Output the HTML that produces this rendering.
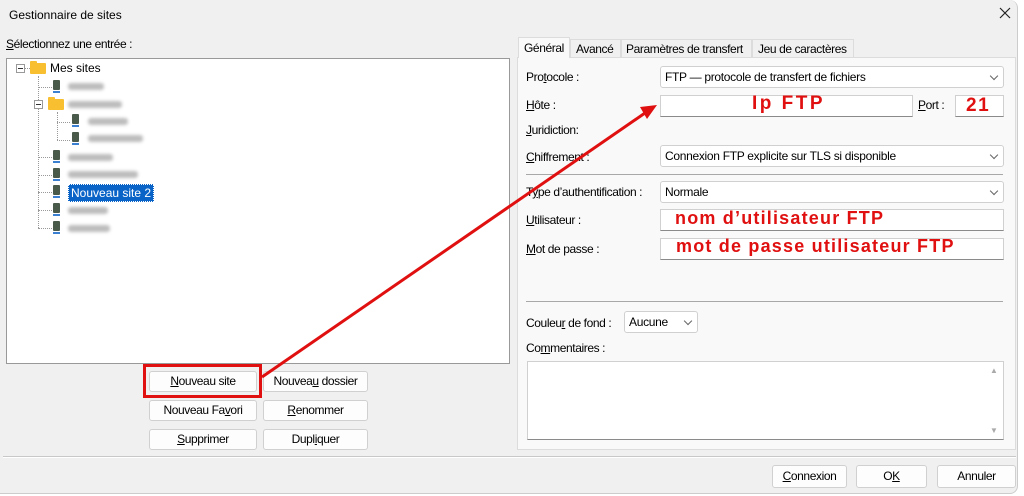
<!DOCTYPE html>
<html><head><meta charset="utf-8"><style>
*{box-sizing:border-box;margin:0;padding:0}
body{width:1024px;height:496px;background:#fff;font-family:"Liberation Sans",sans-serif;font-size:12px;color:#000;position:relative;overflow:hidden}
.win{position:absolute;left:0;top:0;width:1018px;height:494px;background:#f0f0f0;border-right:1px solid #ccc;border-bottom:1px solid #ccc;border-radius:0 8px 8px 0}
.a{position:absolute;white-space:nowrap}
.t{letter-spacing:-0.4px}
.box{position:absolute;background:#fff;border:1px solid #d0d0d0;border-bottom:1px solid #8a8a8a}
.btn{position:absolute;background:#fdfdfd;border:1px solid #d0d0d0;border-radius:3px;text-align:center;line-height:19px;letter-spacing:-0.4px}
.sel{position:absolute;background:#fff;border:1px solid #d0d0d0;border-radius:3px;padding-left:4px;line-height:20px;letter-spacing:-0.3px}
.sel:after{content:"";position:absolute;right:6px;top:6px;width:5px;height:5px;border-right:1px solid #666;border-bottom:1px solid #666;transform:rotate(45deg)}
.red{position:absolute;color:#e01010;font-weight:bold;font-size:18px;letter-spacing:1.2px;white-space:nowrap}
.blur{position:absolute;height:7px;background:#bdbdbd;border-radius:3px;filter:blur(1.5px)}
.srv{position:absolute;width:7px;height:14px}
.srv:before{content:"";position:absolute;left:0;top:0;width:7px;height:10px;background:#4a5a4a;border-radius:1px}
.srv:after{content:"";position:absolute;left:0;top:11px;width:7px;height:2px;background:#3a7fd0}
.fold{position:absolute;width:16px;height:11px;background:#f8c030;border-radius:1px}
.fold:before{content:"";position:absolute;left:0;top:-2px;width:7px;height:3px;background:#f8c030;border-radius:1px 1px 0 0}
.pm{position:absolute;width:9px;height:9px;border:1px solid #999;background:#fff}
.pm:after{content:"";position:absolute;left:1px;top:3px;width:5px;height:1px;background:#333}
.dv{position:absolute;border-left:1px dotted #999}
.dh{position:absolute;border-top:1px dotted #999}
</style></head><body>
<div class="win"></div>
<div class="a" style="left:9px;top:8px">Gestionnaire de sites</div>
<svg class="a" style="left:999px;top:7px" width="12" height="12"><path d="M1 1L11 11M11 1L1 11" stroke="#222" stroke-width="1.2"/></svg>
<div class="a t" style="left:6px;top:37px"><u>S</u>électionnez une entrée :</div>

<div class="box" style="left:6px;top:58px;width:504px;height:306px;border:1px solid #999"></div>
<div class="pm" style="left:16px;top:64px"></div>
<div class="dh" style="left:25px;top:68px;width:5px"></div>
<div class="fold" style="left:30px;top:63px"></div>
<div class="a" style="left:50px;top:61px">Mes sites</div>
<div class="dv" style="left:38px;top:76px;height:152px"></div>
<div class="dh" style="left:38px;top:87px;width:14px"></div>
<div class="srv" style="left:53px;top:80px"></div><div class="blur" style="left:68px;top:83px;width:36px"></div>
<div class="pm" style="left:34px;top:100px"></div>
<div class="fold" style="left:48px;top:99px"></div><div class="blur" style="left:68px;top:101px;width:54px"></div>
<div class="dv" style="left:57px;top:112px;height:28px"></div>
<div class="dh" style="left:57px;top:122px;width:13px"></div>
<div class="dh" style="left:57px;top:140px;width:13px"></div>
<div class="srv" style="left:72px;top:114px"></div><div class="blur" style="left:88px;top:118px;width:40px"></div>
<div class="srv" style="left:72px;top:132px"></div><div class="blur" style="left:88px;top:135px;width:55px"></div>
<div class="dh" style="left:38px;top:157px;width:14px"></div>
<div class="srv" style="left:53px;top:150px"></div><div class="blur" style="left:68px;top:154px;width:45px"></div>
<div class="dh" style="left:38px;top:175px;width:14px"></div>
<div class="srv" style="left:53px;top:168px"></div><div class="blur" style="left:68px;top:171px;width:70px"></div>
<div class="dh" style="left:38px;top:192px;width:14px"></div>
<div class="srv" style="left:53px;top:185px"></div>
<div class="a" style="left:68px;top:184px;background:#0a64c8;color:#fff;padding:1px 2px;border:1px dotted #fff">Nouveau site 2</div>
<div class="dh" style="left:38px;top:210px;width:14px"></div>
<div class="srv" style="left:53px;top:203px"></div><div class="blur" style="left:68px;top:207px;width:40px"></div>
<div class="dh" style="left:38px;top:228px;width:14px"></div>
<div class="srv" style="left:53px;top:221px"></div><div class="blur" style="left:68px;top:225px;width:42px"></div>

<div class="btn" style="left:149px;top:371px;width:108px;height:21px"><u>N</u>ouveau site</div>
<div class="btn" style="left:263px;top:371px;width:105px;height:21px">Nouvea<u>u</u> dossier</div>
<div class="btn" style="left:149px;top:400px;width:108px;height:21px">Nouveau Fa<u>v</u>ori</div>
<div class="btn" style="left:263px;top:400px;width:105px;height:21px"><u>R</u>enommer</div>
<div class="btn" style="left:149px;top:429px;width:108px;height:21px"><u>S</u>upprimer</div>
<div class="btn" style="left:263px;top:429px;width:105px;height:21px">Dupl<u>i</u>quer</div>
<div class="a" style="left:143px;top:364px;width:119px;height:34px;border:3px solid #e01010"></div>

<div class="a" style="left:517px;top:57px;width:499px;height:393px;background:#f9f9f9;border:1px solid #dcdcdc"></div>
<div class="a" style="left:518px;top:37px;width:52px;height:21px;background:#f9f9f9;border:1px solid #dcdcdc;border-bottom:none"></div>
<div class="a t" style="left:524px;top:41px">Général</div>
<div class="a" style="left:570px;top:39px;width:51px;height:18px;background:#f0f0f0;border:1px solid #dcdcdc;border-bottom:none"></div>
<div class="a t" style="left:576px;top:42px">Avancé</div>
<div class="a" style="left:621px;top:39px;width:131px;height:18px;background:#f0f0f0;border:1px solid #dcdcdc;border-bottom:none"></div>
<div class="a t" style="left:626px;top:42px">Paramètres de transfert</div>
<div class="a" style="left:752px;top:39px;width:102px;height:18px;background:#f0f0f0;border:1px solid #dcdcdc;border-bottom:none"></div>
<div class="a t" style="left:758px;top:42px">Jeu de caractères</div>

<div class="a t" style="left:526px;top:70px">Pro<u>t</u>ocole :</div>
<div class="sel" style="left:660px;top:66px;width:344px;height:22px">FTP — protocole de transfert de fichiers</div>
<div class="a t" style="left:526px;top:98px"><u>H</u>ôte :</div>
<div class="box" style="left:660px;top:95px;width:253px;height:22px"></div>
<div class="a t" style="left:918px;top:98px"><u>P</u>ort :</div>
<div class="box" style="left:955px;top:95px;width:49px;height:22px"></div>
<div class="a t" style="left:526px;top:123px"><u>J</u>uridiction:</div>
<div class="a t" style="left:526px;top:150px"><u>C</u>hiffrement :</div>
<div class="sel" style="left:660px;top:145px;width:344px;height:22px">Connexion FTP explicite sur TLS si disponible</div>
<div class="a" style="left:526px;top:174px;width:477px;border-top:1px solid #a8a8a8"></div>
<div class="a t" style="left:526px;top:185px">T<u>y</u>pe d’authentification :</div>
<div class="sel" style="left:660px;top:181px;width:344px;height:22px">Normale</div>
<div class="a t" style="left:526px;top:213px"><u>U</u>tilisateur :</div>
<div class="box" style="left:660px;top:209px;width:344px;height:22px"></div>
<div class="a t" style="left:526px;top:242px"><u>M</u>ot de passe :</div>
<div class="box" style="left:660px;top:238px;width:344px;height:22px"></div>
<div class="a" style="left:526px;top:301px;width:477px;border-top:1px solid #a8a8a8"></div>
<div class="a t" style="left:526px;top:316px">Couleu<u>r</u> de fond :</div>
<div class="sel" style="left:624px;top:311px;width:74px;height:22px">Aucune</div>
<div class="a t" style="left:526px;top:341px">Co<u>m</u>mentaires :</div>
<div class="box" style="left:527px;top:361px;width:477px;height:79px"></div>
<div class="a" style="left:990px;top:366px;font-size:8px;color:#aaa">▲</div>
<div class="a" style="left:990px;top:426px;font-size:8px;color:#aaa">▼</div>

<div class="red" style="left:752px;top:93px;font-size:19px;letter-spacing:2.5px">Ip FTP</div>
<div class="red" style="left:966px;top:95px;font-size:19px;letter-spacing:1.5px">21</div>
<div class="red" style="left:675px;top:208px">nom d’utilisateur FTP</div>
<div class="red" style="left:676px;top:236px">mot de passe utilisateur FTP</div>

<div class="a" style="left:3px;top:456px;width:1013px;border-top:1px solid #c8c8c8;border-bottom:1px solid #fff"></div>
<div class="btn" style="left:772px;top:465px;width:75px;height:23px;line-height:21px"><u>C</u>onnexion</div>
<div class="btn" style="left:856px;top:465px;width:71px;height:23px;line-height:21px">O<u>K</u></div>
<div class="btn" style="left:937px;top:465px;width:79px;height:23px;line-height:21px">Annuler</div>

<svg class="a" style="left:0;top:0" width="1024" height="496">
<line x1="262" y1="377" x2="645" y2="113" stroke="#e01010" stroke-width="3"/>
<polygon points="657,105 640,107 647,119" fill="#e01010"/>
</svg>
</body></html>
